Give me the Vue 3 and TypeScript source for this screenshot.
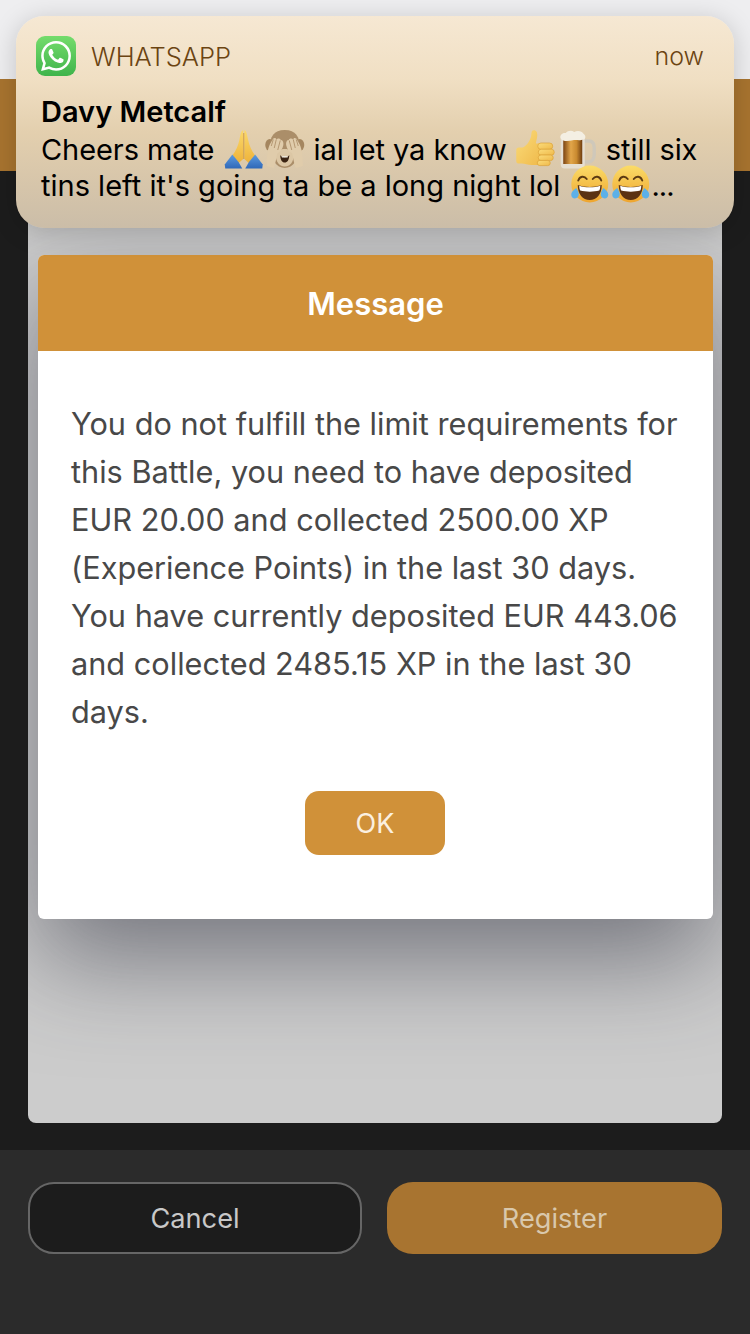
<script setup lang="ts">
const appName: string = 'WHATSAPP'
</script>

<template>
  <div class="screen">
    <svg class="defs" width="0" height="0" aria-hidden="true">
      <defs>
        <linearGradient id="hand" x1="0" y1="0" x2="0" y2="1">
          <stop offset="0" stop-color="#fbd96a" />
          <stop offset="1" stop-color="#eeb23a" />
        </linearGradient>
        <linearGradient id="thumb" x1="0" y1="0" x2="1" y2="1">
          <stop offset="0" stop-color="#fbdc7a" />
          <stop offset="1" stop-color="#efb94a" />
        </linearGradient>
        <linearGradient id="sleeve" x1="0" y1="0" x2="0" y2="1">
          <stop offset="0" stop-color="#5c9be0" />
          <stop offset="1" stop-color="#2f68b8" />
        </linearGradient>
        <linearGradient id="beer" x1="0" y1="0" x2="1" y2="0">
          <stop offset="0" stop-color="#7c4412" />
          <stop offset="0.4" stop-color="#e2a64a" />
          <stop offset="0.7" stop-color="#c98a30" />
          <stop offset="1" stop-color="#6f3d10" />
        </linearGradient>
        <linearGradient id="face" x1="0" y1="0" x2="0" y2="1">
          <stop offset="0" stop-color="#fbdc68" />
          <stop offset="1" stop-color="#eea52f" />
        </linearGradient>
        <symbol id="e-pray" viewBox="0 0 40 40">
          <path d="M19.4 1C17.4 1.6 16.6 6 15.6 11C14.4 17 12 22 8.6 26.5L14.4 34.5L19.4 30Z" fill="url(#hand)" />
          <path d="M20.6 1C22.6 1.6 23.4 6 24.4 11C25.6 17 28 22 31.4 26.5L25.6 34.5L20.6 30Z" fill="url(#hand)" />
          <path d="M8.6 25.5L1 35.5L1.5 39.5H18.5L14.8 33Z" fill="url(#sleeve)" />
          <path d="M31.4 25.5L39 35.5L38.5 39.5H21.5L25.2 33Z" fill="url(#sleeve)" />
          <path d="M20 4V30" stroke="#c98f2c" stroke-width="0.8" />
        </symbol>
        <symbol id="e-monkey" viewBox="0 0 40 40">
          <ellipse cx="5" cy="16" rx="4.5" ry="6" fill="#a5865f" />
          <ellipse cx="35" cy="16" rx="4.5" ry="6" fill="#a5865f" />
          <path d="M20 1C9 1 5 8 5 18C5 30 12 39 20 39C28 39 35 30 35 18C35 8 31 1 20 1Z" fill="#ab8e69" />
          <path d="M11 26C11 22 15 20 20 20C25 20 29 22 29 26C29 33 25 37.5 20 37.5C15 37.5 11 33 11 26Z" fill="#dcc7a5" />
          <path d="M15.5 26C17 29 23 29 24.5 26C24.5 31 22.5 33.5 20 33.5C17.5 33.5 15.5 31 15.5 26Z" fill="#3b2413" />
          <path d="M16.8 27.2H23.2L22.8 28.4H17.2Z" fill="#f5f1e8" />
          <path d="M2 37C2 29 2.5 21 5 15.5L8.5 9.5C10 8.5 11.5 9 11.5 10.5C13 9 15.5 9.5 16 11C18 11 19 13 18.6 16C18 20 15.5 23 12.5 24.5C11.5 29 11 34 9 39Z" fill="#e0ccab" />
          <path d="M38 37C38 29 37.5 21 35 15.5L31.5 9.5C30 8.5 28.5 9 28.5 10.5C27 9 24.5 9.5 24 11C22 11 21 13 21.4 16C22 20 24.5 23 27.5 24.5C28.5 29 29 34 31 39Z" fill="#e0ccab" />
          <path d="M8.5 10.5L6.5 17M11.5 10.5L9.5 19M15.5 11.5L13 21M31.5 10.5L33.5 17M28.5 10.5L30.5 19M24.5 11.5L27 21" stroke="#a98a63" stroke-width="0.8" fill="none" />
        </symbol>
        <symbol id="e-thumb" viewBox="0 0 40 40">
          <path d="M17 1.5C20 0.5 22 3 21.5 7C21 11 20 13 20.2 14.5L26 14.5V36H16C12 36 9 34.5 6 34.5H2.5C1.2 34.5 0.5 33.5 0.5 32V21C0.5 19.5 1.4 18.5 3 18.5H7C11 17 15 11 15.5 6C15.7 3.5 16 2 17 1.5Z" fill="url(#thumb)" />
          <rect x="22" y="14" width="15" height="6.4" rx="3.2" fill="url(#thumb)" stroke="#dba238" stroke-width="0.7" />
          <rect x="22.5" y="20.2" width="16" height="6" rx="3" fill="url(#thumb)" stroke="#dba238" stroke-width="0.7" />
          <rect x="22.5" y="26" width="15" height="5.6" rx="2.8" fill="url(#thumb)" stroke="#dba238" stroke-width="0.7" />
          <rect x="21.5" y="31.4" width="13" height="5.2" rx="2.6" fill="url(#thumb)" stroke="#dba238" stroke-width="0.7" />
        </symbol>
        <symbol id="e-beer" viewBox="0 0 40 40">
          <path d="M27 12H32C36 12 37.5 15 37.5 19V25C37.5 30 35 33 31 33H27" fill="none" stroke="#cfc8ba" stroke-width="3.4" />
          <path d="M4 7H28V35.5C28 38 26.5 39.5 24 39.5H8C5.5 39.5 4 38 4 35.5Z" fill="#e6dfd2" />
          <rect x="6.5" y="9" width="19" height="26" fill="url(#beer)" />
          <path d="M4 9.5C2.5 6.5 5.5 3.5 9 4C11 1.5 15 1 17.5 3C20.5 1 25.5 2 26.5 4.5C29 6 29.5 9.5 27 10.5C22 12 20 10.5 16 11.2C11 12.5 6 12.5 4 9.5Z" fill="#f4efe3" />
        </symbol>
        <symbol id="e-joy" viewBox="0 0 40 40">
          <circle cx="20" cy="19" r="18.5" fill="url(#face)" />
          <path d="M8.5 15.5C10 11 14.5 10.5 17 14" fill="none" stroke="#5b3a12" stroke-width="1.9" stroke-linecap="round" />
          <path d="M31.5 15.5C30 11 25.5 10.5 23 14" fill="none" stroke="#5b3a12" stroke-width="1.9" stroke-linecap="round" />
          <path d="M8 20C15 22.5 25 22.5 32 20C32 29 27 35 20 35C13 35 8 29 8 20Z" fill="#5b3212" />
          <path d="M9.5 20.8C15 22.8 25 22.8 30.5 20.8C30.5 23 30 25 29.5 25.5C24 27 16 27 10.5 25.5C10 25 9.5 23 9.5 20.8Z" fill="#fff" />
          <path d="M6.5 23C3 25.5 1.5 27.5 1.5 29.7C1.5 32 3.2 33.5 5 33.5C7.6 33.5 9 31.4 9 29.3C9 27.2 7.5 24.8 6.5 23Z" fill="#5cb0e8" />
          <path d="M33.5 23C37 25.5 38.5 27.5 38.5 29.7C38.5 32 36.8 33.5 35 33.5C32.4 33.5 31 31.4 31 29.3C31 27.2 32.5 24.8 33.5 23Z" fill="#5cb0e8" />
        </symbol>
      </defs>
    </svg>

    <div class="top-strip"></div>
    <div class="band"></div>

    <main class="content">
      <section class="panel">
        <article class="modal">
          <h2 class="modal-title">Message</h2>
          <div class="modal-body">
            <p class="modal-text">You do not fulfill the limit requirements for this Battle, you need to have deposited EUR 20.00 and collected 2500.00 XP (Experience Points) in the last 30 days. You have currently deposited EUR 443.06 and collected 2485.15 XP in the last 30 days.</p>
            <button class="ok" type="button">OK</button>
          </div>
        </article>
      </section>
    </main>

    <footer class="footer">
      <button class="btn cancel" type="button">Cancel</button>
      <button class="btn register" type="button">Register</button>
    </footer>

    <aside class="notification">
      <header class="n-head">
        <span class="wa-icon">
          <svg viewBox="0 0 24 24" width="30" height="30">
            <path fill="#fff" d="M17.472 14.382c-.297-.149-1.758-.867-2.03-.967-.273-.099-.471-.148-.67.15-.197.297-.767.966-.94 1.164-.173.199-.347.223-.644.075-.297-.15-1.255-.463-2.39-1.475-.883-.788-1.48-1.761-1.653-2.059-.173-.297-.018-.458.13-.606.134-.133.298-.347.446-.52.149-.174.198-.298.298-.497.099-.198.05-.371-.025-.52-.075-.149-.669-1.612-.916-2.207-.242-.579-.487-.5-.669-.51-.173-.008-.371-.01-.57-.01-.198 0-.52.074-.792.372-.272.297-1.04 1.016-1.04 2.479 0 1.462 1.065 2.875 1.213 3.074.149.198 2.096 3.2 5.077 4.487.709.306 1.262.489 1.694.625.712.227 1.36.195 1.871.118.571-.085 1.758-.719 2.006-1.413.248-.694.248-1.289.173-1.413-.074-.124-.272-.198-.57-.347m-5.421 7.403h-.004a9.87 9.87 0 01-5.031-1.378l-.361-.214-3.741.982.998-3.648-.235-.374a9.86 9.86 0 01-1.51-5.26c.001-5.45 4.436-9.884 9.888-9.884 2.64 0 5.122 1.03 6.988 2.898a9.825 9.825 0 012.893 6.994c-.003 5.45-4.437 9.884-9.885 9.884m8.413-18.297A11.815 11.815 0 0012.05 0C5.495 0 .16 5.335.157 11.892c0 2.096.547 4.142 1.588 5.945L.057 24l6.305-1.654a11.882 11.882 0 005.683 1.448h.005c6.554 0 11.89-5.335 11.893-11.893a11.821 11.821 0 00-3.48-8.413z" />
          </svg>
        </span>
        <span class="n-app">{{ appName }}</span>
        <span class="n-time">now</span>
      </header>
      <div class="n-title">Davy Metcalf</div>
      <div class="n-line n-first">Cheers mate <svg class="emoji"><use href="#e-pray" /></svg><svg class="emoji"><use href="#e-monkey" /></svg> ial let ya know <svg class="emoji"><use href="#e-thumb" /></svg><svg class="emoji"><use href="#e-beer" /></svg> still six</div>
      <div class="n-line">tins left it's going ta be a long night lol <svg class="emoji"><use href="#e-joy" /></svg><svg class="emoji"><use href="#e-joy" /></svg><span class="dots">...</span></div>
    </aside>
  </div>
</template>

<style>
html, body { margin: 0; background: #1c1c1c; }
</style>

<style scoped>
.screen {
  position: relative;
  width: 750px;
  height: 1334px;
  overflow: hidden;
  display: flex;
  flex-direction: column;
  background: #1c1c1c;
  font-family: Inter, "Noto Sans", sans-serif;
}
.defs { display: block; width: 0; height: 0; flex: none; }
.top-strip { flex: none; height: 79px; background: #eeeef0; }
.band { flex: none; height: 92px; background: #a8742f; }
.content {
  flex: 1;
  display: flex;
  flex-direction: column;
  min-height: 0;
  padding: 24px 28px 27px;
  background: #1c1c1c;
}
.panel {
  flex: 1;
  overflow: hidden;
  padding: 60px 9px 0 10px;
  background: #cccccc;
  border-radius: 0 0 8px 8px;
}
.modal {
  border-radius: 6px;
  background: #fff;
  box-shadow: 0 40px 100px 0 rgba(45, 48, 62, 0.55);
}
.modal-title {
  margin: 0;
  height: 96px;
  line-height: 98px;
  text-align: center;
  color: #fff;
  font-size: 31px;
  font-weight: 600;
  background: #d09139;
  border-radius: 6px 6px 0 0;
}
.modal-body {
  display: flex;
  flex-direction: column;
  align-items: center;
  padding: 49px 34px 64px 33px;
}
.modal-text {
  margin: 0;
  width: 608px;
  color: #484848;
  font-size: 30.7px;
  line-height: 48px;
}
.ok {
  margin-top: 55px;
  width: 140px;
  height: 64px;
  border: 0;
  padding: 0;
  border-radius: 14px;
  background: #d09139;
  color: #fbf0e0;
  font: 400 27px Inter, sans-serif;
}
.footer {
  flex: none;
  height: 184px;
  box-sizing: border-box;
  display: flex;
  gap: 25px;
  padding: 32px 28px 0;
  align-items: flex-start;
  background: #2b2b2b;
}
.btn {
  flex: none;
  height: 72px;
  box-sizing: border-box;
  padding: 0;
  border-radius: 26px;
  font: 400 27.2px Inter, sans-serif;
}
.cancel {
  width: 334px;
  border: 2px solid #666666;
  background: #1c1c1c;
  color: #c8c8c8;
}
.register {
  width: 335px;
  border: 0;
  background: #a87430;
  color: #d9c8ac;
}
.notification {
  position: absolute;
  left: 16px;
  top: 16px;
  width: 718px;
  height: 212px;
  box-sizing: border-box;
  padding: 20px 25px 0;
  border-radius: 28px;
  background: linear-gradient(180deg, #f6e8d3 0%, #f0dfc3 30%, #e3cfae 55%, #d6c5aa 80%, #cbbda8 100%);
  box-shadow: 0 4px 26px rgba(0, 0, 0, 0.18);
  color: #000;
}
.n-head {
  display: flex;
  align-items: center;
  height: 40px;
  margin-left: -5px;
}
.wa-icon {
  flex: none;
  width: 40px;
  height: 40px;
  display: flex;
  align-items: center;
  justify-content: center;
  border-radius: 9px;
  background: linear-gradient(180deg, #74dc6c, #3fb44b);
}
.n-app {
  margin-left: 15px;
  font-size: 25.5px;
  font-weight: 300;
  color: #6b4412;
}
.n-time {
  margin-left: auto;
  margin-right: 5px;
  font-size: 25px;
  font-weight: 300;
  color: #6b4412;
}
.n-title {
  height: 36px;
  margin-top: 17px;
  font-size: 29px;
  line-height: 37px;
  font-weight: 600;
}
.n-line {
  height: 36px;
  font-size: 29px;
  line-height: 37px;
  white-space: nowrap;
}
.n-first { letter-spacing: -0.08px; }
.dots { letter-spacing: -1px; }
.emoji {
  display: inline-block;
  width: 41.5px;
  height: 40px;
  vertical-align: -9px;
}
</style>
